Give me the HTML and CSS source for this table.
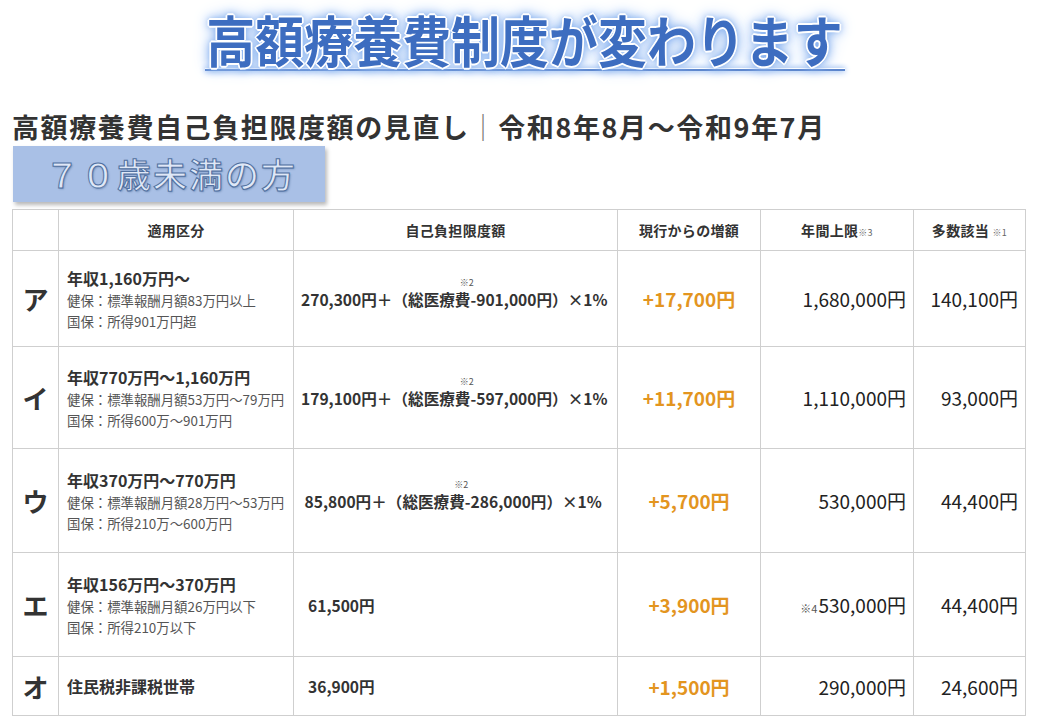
FILE: index.html
```html
<!DOCTYPE html>
<html lang="ja">
<head>
<meta charset="utf-8">
<title>高額療養費制度が変わります</title>
<link rel="stylesheet" href="styles.css">
</head>
<body>
<header class="hero">
  <div class="hero-title"><span class="hero-text">高額療養費制度が変わります</span></div>
  <div class="hero-rule"></div>
</header>
<h2 class="subtitle">高額療養費自己負担限度額の見直し<span class="sep">｜</span>令和8年8月～令和9年7月</h2>
<div class="badge">７０歳未満の方</div>
<table class="grid">
  <colgroup>
    <col class="c-key"><col class="c-cat"><col class="c-limit"><col class="c-inc"><col class="c-year"><col class="c-multi">
  </colgroup>
  <thead>
    <tr class="r-head">
      <th></th>
      <th>適用区分</th>
      <th>自己負担限度額</th>
      <th>現行からの増額</th>
      <th>年間上限<span class="hnote">※3</span></th>
      <th>多数該当 <span class="hnote">※1</span></th>
    </tr>
  </thead>
  <tbody>
    <tr class="r-a">
      <td class="key">ア</td>
      <td class="cat"><div class="cat-main">年収1,160万円～</div><div class="cat-sub">健保：標準報酬月額83万円以上</div><div class="cat-sub">国保：所得901万円超</div></td>
      <td class="limit">270,300円＋（総医療<span class="noted">費<span class="note">※2</span></span>-901,000円）×1%</td>
      <td class="inc">+17,700円</td>
      <td class="num">1,680,000円</td>
      <td class="num">140,100円</td>
    </tr>
    <tr class="r-i">
      <td class="key">イ</td>
      <td class="cat"><div class="cat-main">年収770万円～1,160万円</div><div class="cat-sub">健保：標準報酬月額53万円～79万円</div><div class="cat-sub">国保：所得600万～901万円</div></td>
      <td class="limit">179,100円＋（総医療<span class="noted">費<span class="note">※2</span></span>-597,000円）×1%</td>
      <td class="inc">+11,700円</td>
      <td class="num">1,110,000円</td>
      <td class="num">93,000円</td>
    </tr>
    <tr class="r-u">
      <td class="key">ウ</td>
      <td class="cat"><div class="cat-main">年収370万円～770万円</div><div class="cat-sub">健保：標準報酬月額28万円～53万円</div><div class="cat-sub">国保：所得210万～600万円</div></td>
      <td class="limit">&nbsp;85,800円＋（総医療<span class="noted">費<span class="note">※2</span></span>-286,000円）×1%</td>
      <td class="inc">+5,700円</td>
      <td class="num">530,000円</td>
      <td class="num">44,400円</td>
    </tr>
    <tr class="r-e">
      <td class="key">エ</td>
      <td class="cat"><div class="cat-main">年収156万円～370万円</div><div class="cat-sub">健保：標準報酬月額26万円以下</div><div class="cat-sub">国保：所得210万以下</div></td>
      <td class="limit limit-flat">61,500円</td>
      <td class="inc">+3,900円</td>
      <td class="num"><span class="pnote">※4</span>530,000円</td>
      <td class="num">44,400円</td>
    </tr>
    <tr class="r-o">
      <td class="key">オ</td>
      <td class="cat"><div class="cat-main">住民税非課税世帯</div></td>
      <td class="limit limit-flat">36,900円</td>
      <td class="inc">+1,500円</td>
      <td class="num">290,000円</td>
      <td class="num">24,600円</td>
    </tr>
  </tbody>
</table>
</body>
</html>
```

FILE: styles.css
```css
* { box-sizing: border-box; }

html, body {
  margin: 0;
  padding: 0;
  background: #ffffff;
}

body {
  width: 1040px;
  height: 720px;
  overflow: hidden;
  font-family: "Noto Sans CJK JP", "Noto Sans", sans-serif;
  color: #333333;
}

.hero {
  padding-top: 8px;
  display: flex;
  flex-direction: column;
  align-items: center;
}

.hero-title {
  height: 60px;
  display: flex;
  justify-content: center;
  align-items: center;
  padding-left: 10px;
}

.hero-text {
  display: inline-block;
  font-size: 55px;
  line-height: 60px;
  font-weight: 700;
  color: #3d6dc0;
  white-space: nowrap;
  transform: scaleX(0.89);
  text-shadow:
    0 0 1px #ffffff,
    1px 1px 0 #ffffff, -1px -1px 0 #ffffff, 1px -1px 0 #ffffff, -1px 1px 0 #ffffff,
    2px 0 0 #ffffff, -2px 0 0 #ffffff, 0 2px 0 #ffffff, 0 -2px 0 #ffffff,
    0 0 5px #8fb8f2, 0 0 9px #7eaaec, 0 0 14px #8fb8f2, 0 0 20px #b5d0f7;
}

.hero-rule {
  width: 640px;
  height: 3px;
  margin-left: 10px;
  background: #5a84cc;
  border-top: 1px solid #ffffff;
  box-shadow: 0 1px 6px #8db4ee, 0 -1px 5px #b9d2f6;
}

.subtitle {
  margin: 39px 0 0 12px;
  font-size: 27px;
  line-height: 34px;
  font-weight: 700;
  letter-spacing: 1.6px;
  color: #333333;
  white-space: nowrap;
}

.sep {
  color: #777777;
  font-weight: 400;
}

.badge {
  margin: 2px 0 0 13px;
  width: 312px;
  height: 56px;
  padding-left: 32px;
  background: #a9c0e6;
  box-shadow: 2px 3px 4px rgba(0, 0, 0, 0.28);
  font-size: 34px;
  line-height: 56px;
  font-weight: 500;
  letter-spacing: 2px;
  color: #dfe8f7;
  -webkit-text-stroke: 1px #4f6f9f;
  text-shadow: 1px 1px 2px rgba(40, 70, 120, 0.45);
  white-space: nowrap;
}

.grid {
  margin: 7px 0 0 12px;
  width: 1013px;
  border-collapse: collapse;
  table-layout: fixed;
}

.c-key { width: 46px; }
.c-cat { width: 235px; }
.c-limit { width: 324px; }
.c-inc { width: 143px; }
.c-year { width: 153px; }
.c-multi { width: 112px; }

.grid th,
.grid td {
  border: 1px solid #cfcfcf;
  padding: 0;
  vertical-align: middle;
  background: #ffffff;
}

.r-head { height: 41px; }
.r-a { height: 96px; }
.r-i { height: 102px; }
.r-u { height: 104px; }
.r-e { height: 104px; }
.r-o { height: 59px; }

.grid th {
  font-size: 14px;
  font-weight: 700;
  color: #333333;
  text-align: center;
  letter-spacing: 0.3px;
}

.hnote {
  font-size: 9px;
  font-weight: 400;
  color: #666666;
}

.key {
  text-align: center;
  font-size: 26px;
  font-weight: 700;
  color: #333333;
}

.cat {
  padding-left: 8px !important;
}

.cat-main {
  font-size: 16px;
  font-weight: 700;
  line-height: 24px;
  color: #333333;
  white-space: nowrap;
}

.cat-sub {
  font-size: 13.4px;
  line-height: 21px;
  color: #555555;
  white-space: nowrap;
}

.limit {
  padding-left: 7px !important;
  font-size: 15.6px;
  font-weight: 700;
  color: #333333;
  white-space: nowrap;
}

.limit-flat {
  padding-left: 14px !important;
}

.noted {
  position: relative;
}

.note {
  position: absolute;
  left: 5px;
  top: -12px;
  font-size: 9px;
  font-weight: 400;
  color: #555555;
}

.inc {
  text-align: center;
  font-size: 19px;
  font-weight: 700;
  color: #e3951f;
}

.num {
  text-align: right;
  padding-right: 7px !important;
  font-size: 19px;
  font-weight: 400;
  color: #222222;
  white-space: nowrap;
}

.pnote {
  font-size: 11px;
  color: #555555;
  margin-right: 1px;
}
```
